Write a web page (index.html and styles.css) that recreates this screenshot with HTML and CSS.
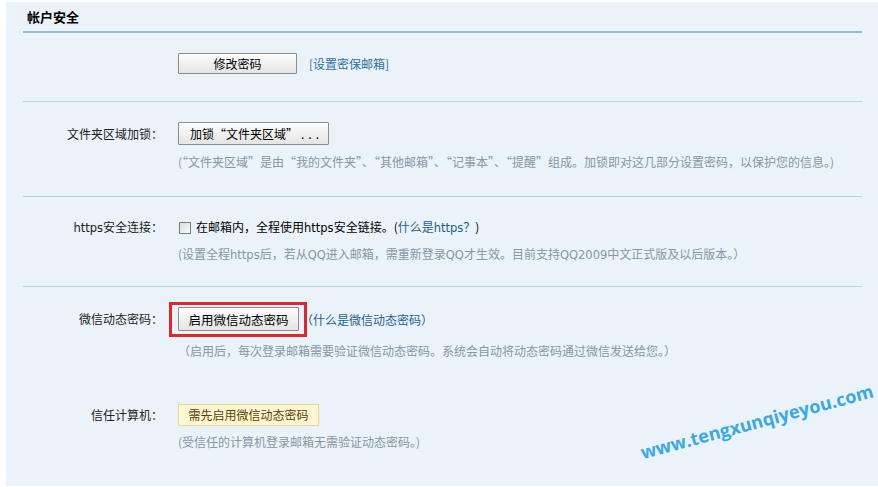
FILE: index.html
```html
<!DOCTYPE html>
<html lang="zh-CN">
<head>
    <meta charset="UTF-8">
    <title>帐户安全</title>
    <link rel="stylesheet" href="styles.css">
</head>
<body>
    <div class="panel">
        <div class="panel-title">帐户安全</div>

        <div class="row row-pwd">
            <div class="label"></div>
            <div class="field">
                <div class="line">
                    <button class="btn btn-pwd">修改密码</button>
                    <a class="link-bracket" href="#">[设置密保邮箱]</a>
                </div>
            </div>
        </div>

        <div class="row row-lock">
            <div class="label">文件夹区域加锁：</div>
            <div class="field">
                <div class="line">
                    <button class="btn btn-lock">加锁“文件夹区域”<span class="dots">...</span></button>
                </div>
                <p class="desc">(“文件夹区域”是由“我的文件夹”、“其他邮箱”、“记事本”、“提醒”组成。加锁即对这几部分设置密码，以保护您的信息。)</p>
            </div>
        </div>

        <div class="row row-https">
            <div class="label"><span class="en">https</span>安全连接：</div>
            <div class="field">
                <div class="line">
                    <span class="check"></span>
                    <span class="check-text">在邮箱内，全程使用<span class="en">https</span>安全链接。(<a class="link" href="#">什么是<span class="en">https</span>？</a>)</span>
                </div>
                <p class="desc">(设置全程<span class="en">https</span>后，若从<span class="en">QQ</span>进入邮箱，需重新登录<span class="en">QQ</span>才生效。目前支持<span class="en">QQ2009</span>中文正式版及以后版本。）</p>
            </div>
        </div>

        <div class="row row-wx">
            <div class="label">微信动态密码：</div>
            <div class="field">
                <div class="line">
                    <span class="mark">
                        <button class="btn btn-wx">启用微信动态密码</button>
                    </span>
                    <a class="link link-wx" href="#">（什么是微信动态密码）</a>
                </div>
                <p class="desc">（启用后，每次登录邮箱需要验证微信动态密码。系统会自动将动态密码通过微信发送给您。）</p>
            </div>
        </div>

        <div class="row row-trust">
            <div class="label">信任计算机：</div>
            <div class="field">
                <div class="line">
                    <span class="notice">需先启用微信动态密码</span>
                </div>
                <p class="desc">(受信任的计算机登录邮箱无需验证动态密码。)</p>
            </div>
        </div>

        <div class="watermark">www.tengxunqiyeyou.com</div>
    </div>
</body>
</html>
```

FILE: styles.css
```css
body {
    margin: 0;
    background: #ffffff;
    font-family: "Noto Sans CJK SC", "Liberation Sans", sans-serif;
    font-size: 12px;
    color: #000;
}
.en {
    font-family: "DejaVu Sans", "Liberation Sans", sans-serif;
    font-size: 11.5px;
}
.panel {
    position: relative;
    margin: 2px 0 0 6px;
    height: 484px;
    padding: 0 16px 0 17px;
    background: #eaf3f9;
    overflow: hidden;
}
.panel-title {
    height: 29px;
    line-height: 30px;
    padding-left: 4px;
    font-size: 13px;
    font-weight: bold;
    border-bottom: 2px solid #8dbfd9;
}
.row {
    display: grid;
    grid-template-columns: 140px 1fr;
    column-gap: 15px;
    border-bottom: 1px solid #b4d4e4;
}
.label {
    text-align: right;
    line-height: 16px;
    color: #222;
}
.line {
    display: flex;
    align-items: center;
}
.desc {
    margin: 0;
    line-height: 16px;
    color: #8896a5;
}
.btn {
    font-family: inherit;
    font-size: 12px;
    color: #000;
    padding: 0;
    border: 1px solid #8c8c8c;
    border-radius: 1px;
    background: linear-gradient(#fdfdfd, #e4e4e4);
}
.link,
.link-bracket {
    text-decoration: none;
    color: #1f5f93;
}
.link-bracket {
    margin-left: 12px;
    color: #2b6fa8;
}

.row-pwd {
    padding-top: 20px;
    box-sizing: border-box;
    height: 69px;
}
.btn-pwd {
    width: 119px;
    height: 21px;
}

.row-lock {
    padding-top: 20px;
    height: 95px;
    box-sizing: border-box;
}
.row-lock .label {
    padding-top: 4px;
}
.btn-lock {
    width: 151px;
    height: 23px;
    text-align: left;
    padding-left: 11px;
}
.dots {
    letter-spacing: 4px;
    margin-left: 3px;
}
.row-lock .desc {
    margin-top: 9px;
}

.row-https {
    padding-top: 22px;
    height: 90px;
    box-sizing: border-box;
}
.check {
    display: inline-block;
    width: 10px;
    height: 10px;
    margin: 0 5px 0 1px;
    border: 1px solid #7c7c7c;
    background: linear-gradient(135deg, #dcdcdc, #fafafa);
}
.check-text {
    line-height: 16px;
}
.row-https .desc {
    margin-top: 10px;
}

.row-wx {
    border-bottom: none;
    padding-top: 20px;
    height: 90px;
    box-sizing: border-box;
}
.row-wx .label {
    padding-top: 4px;
}
.mark {
    position: relative;
    display: inline-flex;
}
.mark::after {
    content: "";
    position: absolute;
    top: -5px;
    left: -9px;
    right: -8px;
    bottom: -6px;
    border: 3px solid #e1262c;
}
.btn-wx {
    width: 121px;
    height: 24px;
    font-size: 12.5px;
}
.link-wx {
    margin-left: 2px;
}
.row-wx .desc {
    margin-top: 12px;
}

.row-trust {
    border-bottom: none;
    padding-top: 27px;
}
.row-trust .label {
    padding-top: 3px;
}
.notice {
    display: inline-block;
    width: 139px;
    height: 20px;
    line-height: 20px;
    text-align: center;
    border: 1px solid #f0d98e;
    background: #fff6d4;
    color: #5f3e00;
}
.row-trust .desc {
    margin-top: 8px;
}

.watermark {
    position: absolute;
    left: 638px;
    top: 438px;
    font-family: "Open Sans", "Liberation Sans", sans-serif;
    font-size: 18px;
    font-weight: bold;
    color: #3aa7e8;
    transform: rotate(-15deg);
    transform-origin: left bottom;
}
```
